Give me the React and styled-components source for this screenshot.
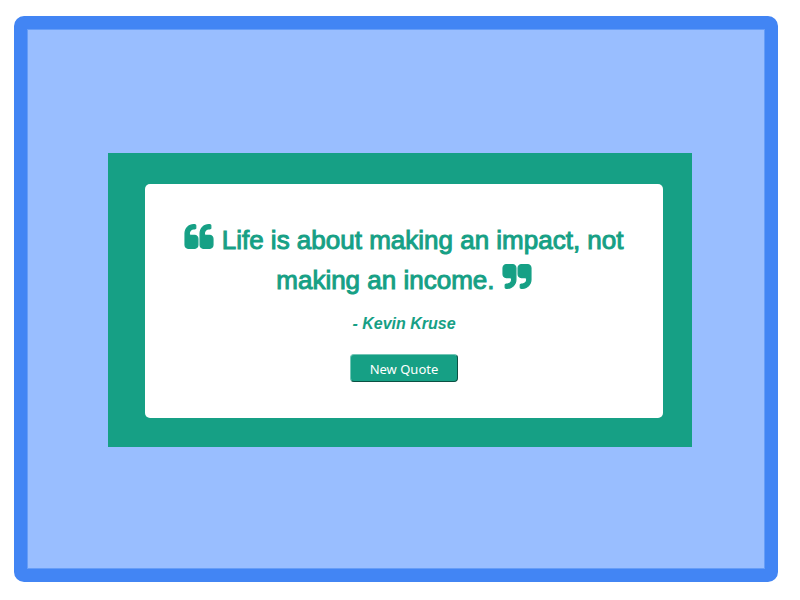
import React from 'react';
import styled, { createGlobalStyle } from 'styled-components';

const GlobalStyle = createGlobalStyle`
  *, *::before, *::after { box-sizing: border-box; }
  body { margin: 0; background: #fff; }
`;

const Page = styled.main`
  min-height: 100vh;
  padding: 16px 22px 18px 14px;
  display: flex;
`;

const Frame = styled.div`
  flex: 1;
  display: flex;
  align-items: center;
  justify-content: center;
  padding: 2px 73px 0 81px;
  border: 13px solid #4285f4;
  border-radius: 10px;
  background: #99beff;
  box-shadow: inset 0 0 0 1px #669df7;
`;

const Backdrop = styled.section`
  flex: 1;
  padding: 31px 29px 29px 37px;
  background: #16a085;
`;

const Card = styled.article`
  display: flex;
  flex-direction: column;
  align-items: center;
  padding: 36px 32px;
  border-radius: 5px;
  background: #fff;
  color: #16a085;
  font-family: "Liberation Sans", Arial, sans-serif;
  text-align: center;
`;

const Quote = styled.blockquote`
  margin: 0;
  font-size: 26px;
  line-height: 40px;
  font-weight: 500;
  -webkit-text-stroke: 1px currentColor;
`;

const Mark = styled.svg`
  width: 30px;
  height: 25px;
  vertical-align: baseline;
  fill: currentColor;
  stroke: currentColor;
  stroke-width: 70;
  transform: ${({ $closing }) => ($closing ? 'rotate(180deg)' : 'none')};
`;

const Author = styled.cite`
  margin-top: 14px;
  font-size: 16px;
  line-height: 20px;
  font-weight: 700;
  font-style: italic;
`;

const QuoteButton = styled.button`
  width: 108px;
  height: 28px;
  margin-top: 20px;
  padding: 2px 0 0;
  border: 1px solid;
  border-color: #73c6b6 #0b5043 #0b5043 #73c6b6;
  border-radius: 4px;
  background: #16a085;
  color: #fff;
  font: 13px/20px "Noto Sans", sans-serif;
  cursor: pointer;
`;

function QuoteMark({ closing = false }) {
  return (
    <Mark $closing={closing} viewBox="-40 88 1744 1488" aria-hidden="true">
      <path d="M768 960v384q0 80-56 136t-136 56H192q-80 0-136-56T0 1344V640q0-104 40.500-198.500T150 278t163.500-109.500T512 128h64q26 0 45 19t19 45v128q0 26-19 45t-45 19h-64q-106 0-181 75t-75 181v32q0 40 28 68t68 28h224q80 0 136 56t56 136zM1664 960v384q0 80-56 136t-136 56h-384q-80 0-136-56t-56-136V640q0-104 40.500-198.500T1046 278t163.500-109.500T1408 128h64q26 0 45 19t19 45v128q0 26-19 45t-45 19h-64q-106 0-181 75t-75 181v32q0 40 28 68t68 28h224q80 0 136 56t56 136z" />
    </Mark>
  );
}

export default function App() {
  return (
    <>
      <GlobalStyle />
      <Page>
        <Frame>
          <Backdrop>
            <Card>
              <Quote>
                <QuoteMark /> Life is about making an impact, not
                making an income. <QuoteMark closing />
              </Quote>
              <Author>- Kevin Kruse</Author>
              <QuoteButton type="button">New Quote</QuoteButton>
            </Card>
          </Backdrop>
        </Frame>
      </Page>
    </>
  );
}
